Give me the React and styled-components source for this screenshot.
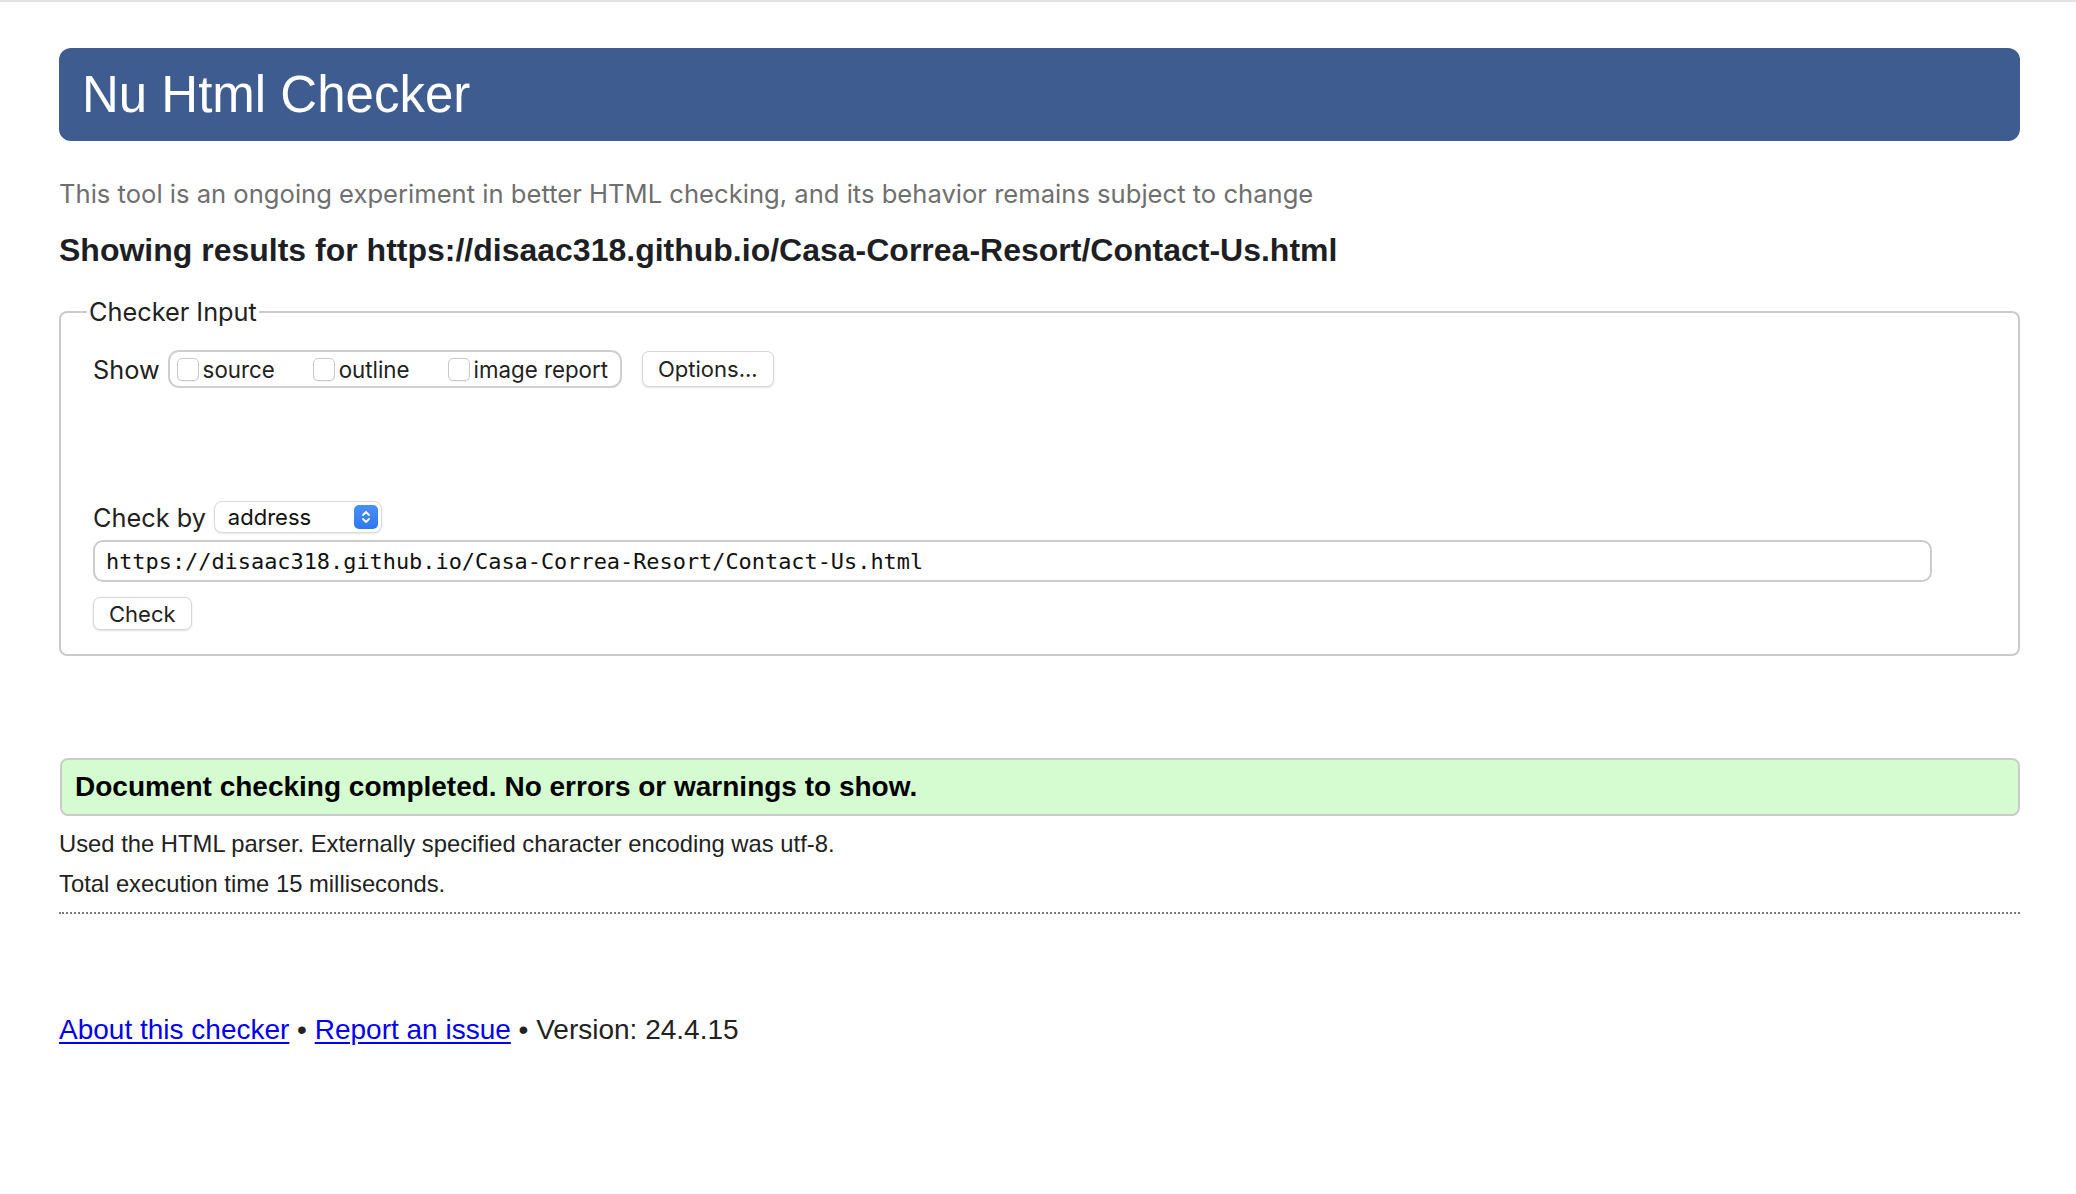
import styled, { createGlobalStyle } from "styled-components";

const GlobalStyle = createGlobalStyle`
  html, body {
    margin: 0;
    padding: 0;
    background: #fff;
  }
  body {
    font-family: "Liberation Sans", Arial, Helvetica, sans-serif;
    color: #222;
  }
`;

const Page = styled.div`
  border-top: 2px solid #e3e3e3;
  padding: 46px 56px 150px 59px;
  display: flex;
  flex-direction: column;
`;

const Header = styled.header`
  height: 93px;
  background: #3e5c90;
  border-radius: 12px;
  display: flex;
  align-items: center;
  padding-left: 23px;
`;

const Title = styled.h1`
  margin: 0;
  font-family: "Liberation Sans", Arial, sans-serif;
  font-weight: 400;
  font-size: 51px;
  color: #fff;
`;

const Intro = styled.p`
  margin: 37px 0 0;
  font-family: "Inter", "Noto Sans", sans-serif;
  font-size: 25.6px;
  line-height: 31px;
  color: #6f6f6f;
`;

const ResultsHeading = styled.h2`
  margin: 22px 0 0;
  font-family: "Liberation Sans", Arial, sans-serif;
  font-weight: 700;
  font-size: 32px;
  line-height: 38px;
  color: #1d1f24;
`;

const Fieldset = styled.fieldset`
  margin: 28px 0 0;
  padding: 23px 30px 24px 32px;
  border: 2px solid #cacaca;
  border-radius: 8px;
  font-family: "Inter", "Noto Sans", sans-serif;
  color: #222;
`;

const Legend = styled.legend`
  margin-left: -6px;
  padding: 0 2px;
  font-size: 25.3px;
  line-height: 30px;
  color: #222;
`;

const Row = styled.div`
  display: flex;
  align-items: center;
  gap: ${(p) => p.$gap || 0}px;
  margin-top: ${(p) => p.$top || 0}px;
`;

const Label = styled.span`
  font-size: 25.3px;
  color: #222;
`;

const ShowGroup = styled.div`
  height: 38px;
  box-sizing: border-box;
  border: 2px solid #cfcfcf;
  border-radius: 11px;
  display: flex;
  align-items: center;
  padding: 0 12px 0 7px;
  gap: 38px;
`;

const CheckItem = styled.label`
  display: flex;
  align-items: center;
  gap: 4px;
  font-size: 22.3px;
  color: #222;
`;

const Box = styled.span`
  width: 22px;
  height: 23px;
  box-sizing: border-box;
  border: 1px solid #c8c8c8;
  border-radius: 5px;
  background: #fff;
  box-shadow: 0 1px 1px rgba(0, 0, 0, 0.05);
`;

const Button = styled.button`
  height: ${(p) => p.$h || 34}px;
  padding: 0 ${(p) => p.$px || 16}px;
  margin-left: ${(p) => p.$ml || 0}px;
  border: 1px solid #d6d6d6;
  border-radius: 7px;
  background: #fff;
  box-shadow: 0 1px 2px rgba(0, 0, 0, 0.12);
  font-family: "Inter", "Noto Sans", sans-serif;
  font-size: 22px;
  color: #222;
`;

const SelectBox = styled.div`
  width: 168px;
  height: 32px;
  box-sizing: border-box;
  border: 1px solid #dadada;
  border-radius: 8px;
  background: #fff;
  box-shadow: 0 1px 2px rgba(0, 0, 0, 0.1);
  display: flex;
  align-items: center;
  justify-content: space-between;
  padding: 0 3px 0 13px;
  font-size: 22px;
  color: #111;
`;

const Stepper = styled.span`
  width: 24px;
  height: 24px;
  border-radius: 5px;
  background: linear-gradient(#4a8ff8, #2f76f0);
  display: flex;
  align-items: center;
  justify-content: center;
`;

const UrlInput = styled.input`
  display: block;
  margin-top: 7px;
  width: calc(100% - 56px);
  height: 42px;
  box-sizing: border-box;
  border: 2px solid #cccccc;
  border-radius: 10px;
  padding: 0 11px;
  font-family: "DejaVu Sans Mono", "Liberation Mono", monospace;
  font-size: 21.9px;
  color: #111;
  background: #fff;
  outline: none;
`;

const CheckRow = styled.div`
  margin-top: 15px;
`;

const Success = styled.div`
  margin: 102px 0 0 1px;
  border: 2px solid #cbcbcb;
  border-radius: 8px;
  background: #d5fcd0;
  padding: 0 13px;
  font-family: "Liberation Sans", Arial, sans-serif;
  font-weight: 700;
  font-size: 28px;
  line-height: 54px;
  color: #000;
`;

const Details = styled.div`
  margin-top: 8px;
  font-size: 23.8px;
  line-height: 40px;
  color: #222;
`;

const Rule = styled.hr`
  margin: 8px 0 0;
  border: 0;
  border-top: 2px dotted #7a7a7a;
`;

const Footer = styled.p`
  margin: 99px 0 0;
  font-size: 28px;
  line-height: 34px;
  color: #222;
`;

const Link = styled.a`
  color: #0000ee;
  text-decoration: underline;
  text-underline-offset: 3px;
`;

const StepperIcon = () => (
  <svg width="12" height="16" viewBox="0 0 12 16" fill="none">
    <path d="M3 6 L6 3 L9 6" stroke="#fff" strokeWidth="1.8" strokeLinecap="round" strokeLinejoin="round" />
    <path d="M3 10 L6 13 L9 10" stroke="#fff" strokeWidth="1.8" strokeLinecap="round" strokeLinejoin="round" />
  </svg>
);

const url = "https://disaac318.github.io/Casa-Correa-Resort/Contact-Us.html";

export default function App() {
  return (
    <>
      <GlobalStyle />
      <Page>
        <Header>
          <Title>Nu Html Checker</Title>
        </Header>
        <Intro>
          This tool is an ongoing experiment in better HTML checking, and its behavior remains subject to change
        </Intro>
        <ResultsHeading>Showing results for {url}</ResultsHeading>

        <Fieldset>
          <Legend>Checker Input</Legend>
          <Row $gap={8}>
            <Label>Show</Label>
            <ShowGroup>
              {["source", "outline", "image report"].map((name) => (
                <CheckItem key={name}>
                  <Box />
                  {name}
                </CheckItem>
              ))}
            </ShowGroup>
            <Button $h={36} $px={15} $ml={12}>Options...</Button>
          </Row>

          <Row $gap={8} $top={113}>
            <Label>Check by</Label>
            <SelectBox>
              address
              <Stepper>
                <StepperIcon />
              </Stepper>
            </SelectBox>
          </Row>
          <UrlInput defaultValue={url} readOnly />
          <CheckRow>
            <Button $h={33} $px={15}>Check</Button>
          </CheckRow>
        </Fieldset>

        <Success>Document checking completed. No errors or warnings to show.</Success>
        <Details>
          Used the HTML parser. Externally specified character encoding was utf-8.
          <br />
          Total execution time 15 milliseconds.
        </Details>
        <Rule />
        <Footer>
          <Link href="#">About this checker</Link> • <Link href="#">Report an issue</Link> • Version: 24.4.15
        </Footer>
      </Page>
    </>
  );
}
